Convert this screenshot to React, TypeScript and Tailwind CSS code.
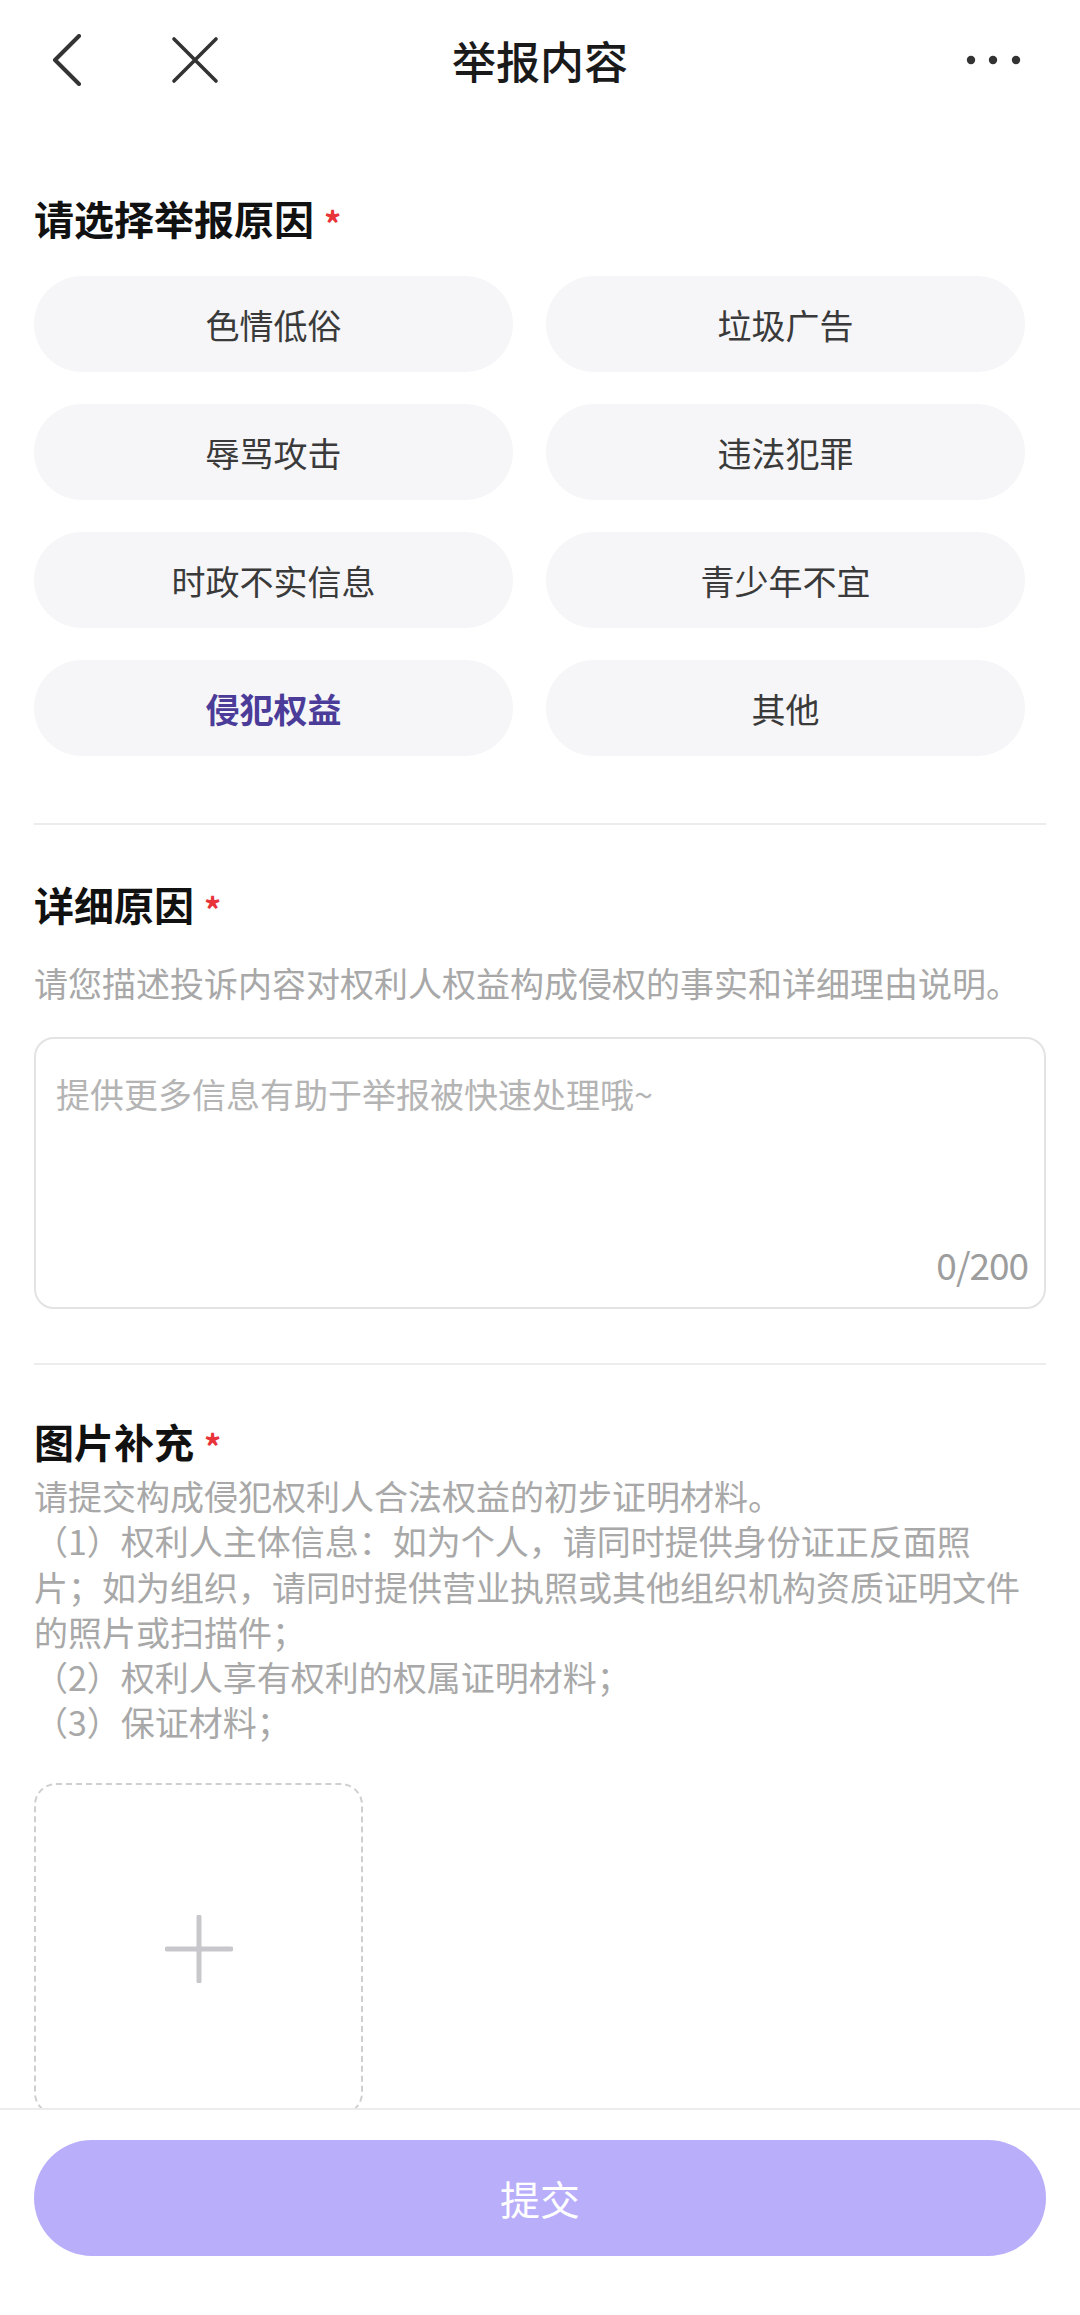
import React from "react";

const reasons = [
  "色情低俗",
  "垃圾广告",
  "辱骂攻击",
  "违法犯罪",
  "时政不实信息",
  "青少年不宜",
  "侵犯权益",
  "其他",
];

function Star() {
  return (
    <span className="ml-[10px] inline-block text-[34px] leading-[34px] text-[#e8333a] font-bold relative top-[12px]">
      *
    </span>
  );
}

function Heading({ children }: { children: React.ReactNode }) {
  return (
    <div className="flex items-start text-[40px] leading-[48px] font-bold text-[#111]">
      <span>{children}</span>
      <Star />
    </div>
  );
}

export default function App() {
  const selected = "侵犯权益";
  return (
    <div
      className="w-[1080px] h-[2315px] bg-white flex flex-col overflow-hidden"
      style={{ fontFamily: '"Noto Sans CJK SC", "Noto Sans", sans-serif' }}
    >
      {/* Header */}
      <div className="h-[120px] shrink-0 grid grid-cols-[1fr_auto_1fr] items-center">
        <div className="flex items-center">
          <svg width="34" height="52" viewBox="0 0 34 52" className="ml-[50px]">
            <path d="M29 2 L5 26 L29 50" fill="none" stroke="#333" strokeWidth="4" strokeLinecap="round" strokeLinejoin="round" />
          </svg>
          <svg width="50" height="50" viewBox="0 0 50 50" className="ml-[86px]">
            <path d="M4 4 L46 46 M46 4 L4 46" fill="none" stroke="#333" strokeWidth="3.6" strokeLinecap="round" />
          </svg>
        </div>
        <div className="text-[44px] leading-[52px] text-[#1a1a1a] font-medium">举报内容</div>
        <div className="flex justify-end pr-[58px]">
          <svg width="56" height="10" viewBox="0 0 56 10">
            <circle cx="5" cy="5" r="4.2" fill="#333" />
            <circle cx="27" cy="5" r="4.2" fill="#333" />
            <circle cx="50" cy="5" r="4.2" fill="#333" />
          </svg>
        </div>
      </div>

      {/* Content */}
      <div className="flex-1 overflow-hidden px-[34px]">
        <div className="mt-[74px]">
          <Heading>请选择举报原因</Heading>
        </div>
        <div className="mt-[34px] w-[991px] grid grid-cols-2 gap-x-[33px] gap-y-[32px]">
          {reasons.map((r) => (
            <div
              key={r}
              className={
                r === selected
                  ? "h-[96px] rounded-full bg-[#f6f6f8] flex items-center justify-center text-[34px] font-bold text-[#4b3c99]"
                  : "h-[96px] rounded-full bg-[#f6f6f8] flex items-center justify-center text-[34px] text-[#3a3a3a]"
              }
            >
              {r}
            </div>
          ))}
        </div>

        <div className="mt-[67px] h-[2px] bg-[#ececec]" />

        <div className="mt-[55px]">
          <Heading>详细原因</Heading>
        </div>
        <div className="mt-[32px] text-[34px] leading-[46px] text-[#a8a8a8] whitespace-nowrap">
          请您描述投诉内容对权利人权益构成侵权的事实和详细理由说明。
        </div>
        <div className="mt-[31px] h-[272px] rounded-[20px] border-2 border-[#e3e3e3] flex flex-col justify-between pl-[20px] pr-[16px] pt-[32px] pb-[20px]">
          <div className="text-[34px] leading-[46px] text-[#b4b4b4]">提供更多信息有助于举报被快速处理哦~</div>
          <div className="self-end text-[37px] leading-[46px] text-[#9d9d9d] tracking-[-1px]">0/200</div>
        </div>

        <div className="mt-[54px] h-[2px] bg-[#ececec]" />

        <div className="mt-[52px]">
          <Heading>图片补充</Heading>
        </div>
        <div className="mt-[8px] text-[34px] leading-[45.3px] text-[#a8a8a8] whitespace-nowrap">
          <div>请提交构成侵犯权利人合法权益的初步证明材料。</div>
          <div>（1）权利人主体信息：如为个人，请同时提供身份证正反面照</div>
          <div>片；如为组织，请同时提供营业执照或其他组织机构资质证明文件</div>
          <div>的照片或扫描件；</div>
          <div>（2）权利人享有权利的权属证明材料；</div>
          <div>（3）保证材料；</div>
        </div>

        <div className="mt-[38px] w-[329px] h-[332px] rounded-[22px] border-2 border-dashed border-[#cfcfcf] flex items-center justify-center">
          <svg width="68" height="68" viewBox="0 0 68 68">
            <path d="M34 2 V66 M2 34 H66" stroke="#c8c8cc" strokeWidth="5" strokeLinecap="round" />
          </svg>
        </div>
      </div>

      {/* Bottom bar */}
      <div className="h-[207px] shrink-0 border-t-2 border-[#ececec] bg-white px-[34px] pt-[30px]">
        <div className="h-[116px] rounded-full bg-[#b8aefa] flex items-center justify-center text-[40px] text-white">
          提交
        </div>
      </div>
    </div>
  );
}
